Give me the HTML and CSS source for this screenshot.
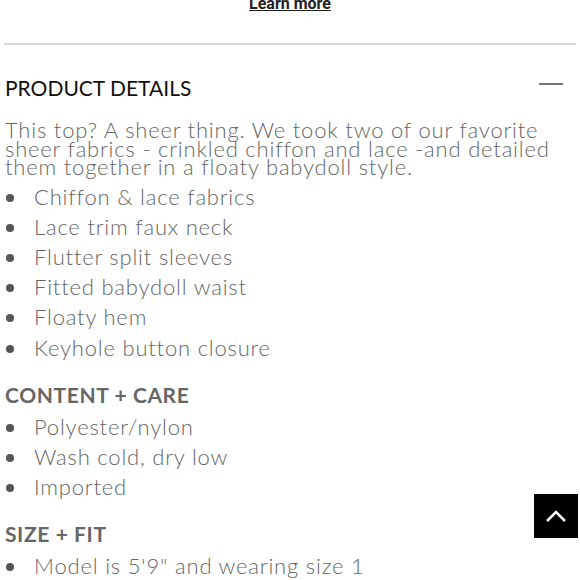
FILE: index.html
```html
<!DOCTYPE html>
<html>
<head>
<meta charset="utf-8">
<link rel="stylesheet" href="styles.css">
</head>
<body>
<div class="page">
  <div class="learn"><a href="#" class="learn-link">Learn more</a></div>
  <hr class="divider">
  <section class="details">
    <div class="details-head">
      <h2 class="details-title">PRODUCT DETAILS</h2>
      <span class="minus"></span>
    </div>
    <p class="intro">This top? A sheer thing. We took two of our favorite sheer fabrics - crinkled chiffon and lace -and detailed them together in a floaty babydoll style.</p>
    <ul class="list">
      <li>Chiffon &amp; lace fabrics</li>
      <li>Lace trim faux neck</li>
      <li>Flutter split sleeves</li>
      <li>Fitted babydoll waist</li>
      <li>Floaty hem</li>
      <li>Keyhole button closure</li>
    </ul>
    <h3 class="sub">CONTENT + CARE</h3>
    <ul class="list">
      <li>Polyester/nylon</li>
      <li>Wash cold, dry low</li>
      <li>Imported</li>
    </ul>
    <h3 class="sub">SIZE + FIT</h3>
    <ul class="list">
      <li>Model is 5'9" and wearing size 1</li>
    </ul>
  </section>
</div>
<button class="to-top" aria-label="Back to top">
  <svg width="22" height="14" viewBox="0 0 22 14"><path d="M2 12 L11 3 L20 12" fill="none" stroke="#fff" stroke-width="2.5"/></svg>
</button>
</body>
</html>
```
FILE: styles.css
```css
html, body {
  margin: 0;
  padding: 0;
  background: #fff;
  overflow: hidden;
}
.page {
  width: 580px;
  font-family: "Lato", sans-serif;
}
.learn {
  text-align: center;
  height: 17px;
  margin-top: -7px;
  line-height: 20px;
}
.learn-link {
  font-family: Roboto, sans-serif;
  font-weight: 700;
  font-size: 16px;
  color: #222;
  text-decoration: underline;
}
.divider {
  border: 0;
  border-top: 2px solid #d8d8d8;
  margin: 33px 4px 0 4px;
}
.details {
  padding: 0 5px;
}
.details-head {
  display: flex;
  align-items: center;
  justify-content: space-between;
  margin-top: 29px;
  height: 26px;
}
.details-title {
  margin: 0;
  font-weight: 400;
  font-size: 21px;
  letter-spacing: 0;
  color: #111;
}
.minus {
  width: 24px;
  height: 2px;
  background: #777;
  margin-right: 12px;
  margin-top: -6px;
}
.intro {
  margin: 21px 0 0 0;
  font-size: 22px;
  font-weight: 300;
  line-height: 18.5px;
  color: #666;
  letter-spacing: 0.8px;
}
.list {
  list-style: none;
  margin: 5px 0 0 0;
  padding: 0;
}
.list li {
  position: relative;
  padding-left: 29px;
  font-size: 22px;
  font-weight: 300;
  line-height: 30.2px;
  color: #666;
  letter-spacing: 0.8px;
}
.list li::before {
  content: "";
  position: absolute;
  left: 1px;
  top: 12px;
  width: 8px;
  height: 8px;
  border-radius: 50%;
  background: #555;
}
.sub {
  margin: 19px 0 0 0;
  font-size: 21px;
  font-weight: 700;
  letter-spacing: 0.6px;
  color: #666;
}
.to-top {
  position: fixed;
  left: 534px;
  top: 494px;
  width: 44px;
  height: 44px;
  background: #000;
  border: 0;
  padding: 0;
  display: flex;
  align-items: center;
  justify-content: center;
}
```
